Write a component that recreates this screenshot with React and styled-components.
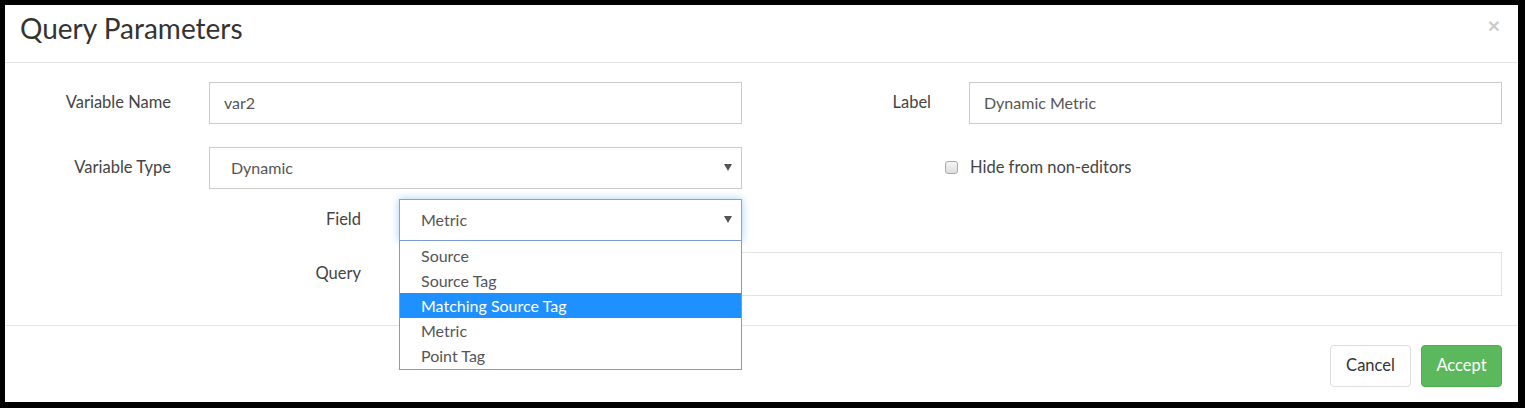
import React from "react";
import styled, { createGlobalStyle } from "styled-components";

const GlobalStyle = createGlobalStyle`
  html, body {
    margin: 0;
    padding: 0;
    background: #000;
  }
  body {
    font-family: Lato, "Noto Sans", "Liberation Sans", sans-serif;
  }
`;

const Frame = styled.div`
  padding: 5px 7px 6px 5px;
  background: #000;
`;

const Modal = styled.div`
  background: #fff;
  display: flex;
  flex-direction: column;
`;

const Header = styled.div`
  height: 58px;
  box-sizing: border-box;
  padding: 7px 18px 0 15px;
  border-bottom: 1px solid #e5e5e5;
  display: flex;
  justify-content: space-between;
  align-items: flex-start;
`;

const Title = styled.h4`
  margin: 0;
  font-size: 28px;
  line-height: 32px;
  font-weight: 400;
  color: #333;
`;

const Close = styled.button`
  border: none;
  background: none;
  padding: 0;
  margin-top: 2px;
  font-size: 21px;
  line-height: 24px;
  font-weight: 700;
  color: #000;
  opacity: 0.2;
  cursor: pointer;
  font-family: "Liberation Sans", sans-serif;
`;

const Body = styled.div`
  padding: 19px 16px 29px 14px;
`;

const TopGrid = styled.div`
  display: grid;
  grid-template-columns: 723px 723px;
  column-gap: 37px;
  row-gap: 23px;
`;

const Row = styled.div`
  display: grid;
  grid-template-columns: 152px 1fr;
  column-gap: 38px;
  align-items: center;
  height: 42px;
`;

const Label = styled.label`
  text-align: right;
  font-size: 16.5px;
  line-height: 20px;
  padding-bottom: 2px;
  color: #444;
`;

const Input = styled.div`
  height: ${(p) => p.$h || 42}px;
  box-sizing: border-box;
  border: 1px solid ${(p) => (p.$light ? "#e3e3e3" : "#ccc")};
  padding: 0 14px 2px;
  display: flex;
  align-items: center;
  font-size: 16px;
  color: #555;
  background: #fff;
`;

const Select = styled.div`
  position: relative;
  height: 42px;
  width: ${(p) => (p.$w ? `${p.$w}px` : "auto")};
  box-sizing: border-box;
  border: 1px solid ${(p) => (p.$focus ? "#66afe9" : "#ccc")};
  box-shadow: ${(p) =>
    p.$focus ? "0 0 8px rgba(102, 175, 233, 0.6)" : "none"};
  padding: 0 9px 2px 21px;
  display: flex;
  align-items: center;
  justify-content: space-between;
  font-size: 16px;
  color: #555;
  background: #fff;
`;

const Caret = styled.span`
  width: 0;
  height: 0;
  border-left: 4px solid transparent;
  border-right: 4px solid transparent;
  border-top: 7px solid #555;
`;

const Menu = styled.ul`
  position: absolute;
  top: 100%;
  left: -1px;
  right: -1px;
  margin: 0;
  padding: 2px 0 1px;
  list-style: none;
  border: 1px solid #7d9bd3;
  background: #fff;
  z-index: 2;
`;

const Item = styled.li`
  height: 25px;
  line-height: 25px;
  padding-left: 21px;
  font-size: 16px;
  color: ${(p) => (p.$active ? "#fff" : "#555")};
  background: ${(p) => (p.$active ? "#1e90ff" : "transparent")};
`;

const CheckRow = styled.div`
  height: 42px;
  display: flex;
  align-items: center;
  padding-left: 166px;
  padding-bottom: 2px;
  box-sizing: border-box;
  gap: 12px;
  font-size: 16.5px;
  color: #444;
`;

const Box = styled.span`
  width: 13px;
  height: 13px;
  box-sizing: border-box;
  border: 1px solid #a9a9a9;
  border-radius: 3px;
  background: linear-gradient(#f4f4f4, #dedede);
`;

const SubGrid = styled.div`
  margin: 10px 0 0 190px;
  display: flex;
  flex-direction: column;
  gap: 11px;
`;

const SubRow = styled.div`
  display: grid;
  grid-template-columns: 152px 1fr;
  column-gap: 38px;
  align-items: center;
`;

const Footer = styled.div`
  border-top: 1px solid #e5e5e5;
  padding: 19px 16px 15px;
  display: flex;
  justify-content: flex-end;
  gap: 10px;
`;

const Button = styled.button`
  width: 81px;
  height: 42px;
  padding: 0 0 2px;
  border-radius: 4px;
  font-family: inherit;
  font-size: 16.5px;
  border: 1px solid ${(p) => (p.$primary ? "#4cae4c" : "#ddd")};
  background: ${(p) => (p.$primary ? "#5cb85c" : "#fff")};
  color: ${(p) => (p.$primary ? "#fff" : "#333")};
  cursor: pointer;
`;

const options = ["Source", "Source Tag", "Matching Source Tag", "Metric", "Point Tag"];

export default function App() {
  return (
    <>
      <GlobalStyle />
      <Frame>
        <Modal>
          <Header>
            <Title>Query Parameters</Title>
            <Close>×</Close>
          </Header>
          <Body>
            <TopGrid>
              <Row>
                <Label>Variable Name</Label>
                <Input>var2</Input>
              </Row>
              <Row>
                <Label>Label</Label>
                <Input>Dynamic Metric</Input>
              </Row>
              <Row>
                <Label>Variable Type</Label>
                <Select>
                  Dynamic
                  <Caret />
                </Select>
              </Row>
              <CheckRow>
                <Box />
                Hide from non-editors
              </CheckRow>
            </TopGrid>
            <SubGrid>
              <SubRow>
                <Label>Field</Label>
                <Select $w={343} $focus>
                  Metric
                  <Caret />
                  <Menu>
                    {options.map((o) => (
                      <Item key={o} $active={o === "Matching Source Tag"}>
                        {o}
                      </Item>
                    ))}
                  </Menu>
                </Select>
              </SubRow>
              <SubRow>
                <Label>Query</Label>
                <Input $h={44} $light />
              </SubRow>
            </SubGrid>
          </Body>
          <Footer>
            <Button>Cancel</Button>
            <Button $primary>Accept</Button>
          </Footer>
        </Modal>
      </Frame>
    </>
  );
}
